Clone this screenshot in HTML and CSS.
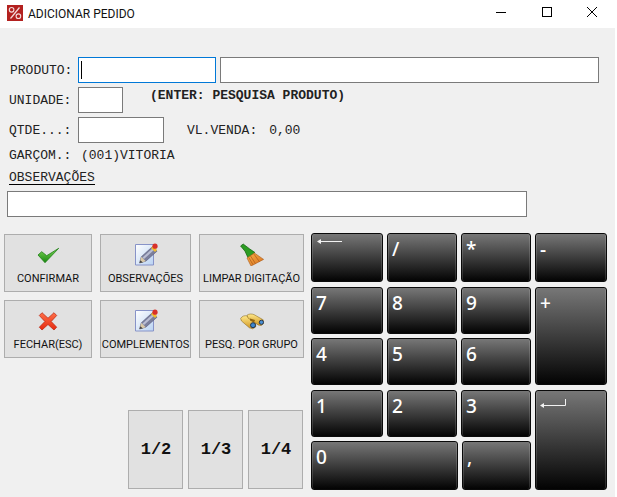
FILE: index.html
```html
<!DOCTYPE html>
<html lang="pt">
<head>
<meta charset="utf-8">
<title>ADICIONAR PEDIDO</title>
<link rel="stylesheet" href="styles.css">
</head>
<body>
<div class="window">
  <header class="titlebar">
    <svg class="app-icon" viewBox="0 0 16 16"><rect width="16" height="16" fill="#b3211f"/><circle cx="4.6" cy="4.8" r="2.3" fill="none" stroke="#f3dcdc" stroke-width="1.1"/><circle cx="11.4" cy="11.2" r="2.3" fill="none" stroke="#f3dcdc" stroke-width="1.1"/><path d="M12.5 2.5 3.5 13.5" stroke="#f3dcdc" stroke-width="1.2"/></svg>
    <span class="title">ADICIONAR PEDIDO</span>
    <div class="controls">
      <span class="ctl"><svg viewBox="0 0 12 12"><path d="M1 6.5h10" stroke="#000"/></svg></span>
      <span class="ctl"><svg viewBox="0 0 12 12"><rect x="1.5" y="1.5" width="9" height="9" fill="none" stroke="#000"/></svg></span>
      <span class="ctl"><svg viewBox="0 0 12 12"><path d="M1 1l10 10M11 1 1 11" stroke="#000" stroke-width="1"/></svg></span>
    </div>
  </header>
  <main class="content">
    <section class="form">
      <div class="row">
        <label class="label label-produto">PRODUTO:</label>
        <div class="input input-code focus"><span class="caret"></span></div>
        <div class="input input-desc"></div>
      </div>
      <div class="row">
        <label class="label">UNIDADE:</label>
        <div class="input input-unit"></div>
        <strong class="hint">(ENTER: PESQUISA PRODUTO)</strong>
      </div>
      <div class="row">
        <label class="label">QTDE...:</label>
        <div class="input input-qty"></div>
        <span class="price-label">VL.VENDA:</span>
        <span class="price-value">0,00</span>
      </div>
      <div class="row-waiter">
        <span class="waiter-label">GARÇOM.:</span>
        <span class="waiter-name">(001)VITORIA</span>
      </div>
      <div class="obs-title">OBSERVAÇÕES</div>
      <div class="input input-obs"></div>
    </section>
    <section class="lower">
      <div class="left">
        <div class="actions">
          <button class="action">
            <svg class="ico" viewBox="0 0 24 24"><defs><linearGradient id="g1" x1="0" y1="0" x2="0" y2="1"><stop offset="0" stop-color="#7fd957"/><stop offset="1" stop-color="#17860f"/></linearGradient></defs><path d="M22.7 6.3 9 20.7 2 13l3.7-3.3 5 4z" fill="url(#g1)" stroke="#1f7f18" stroke-width=".8"/></svg>
            <span>CONFIRMAR</span>
          </button>
          <button class="action">
            <svg class="ico" viewBox="0 0 24 24"><use href="#note"/></svg>
            <span>OBSERVAÇÕES</span>
          </button>
          <button class="action">
            <svg class="ico" viewBox="0 0 24 24"><defs><linearGradient id="g3" x1="0" y1="0" x2="1" y2="1"><stop offset="0" stop-color="#f9b04a"/><stop offset="1" stop-color="#d8701c"/></linearGradient></defs><path d="M.6 4 3.2 2 9.5 6.8 15 10.6 8 15.8 5 9.2z" fill="#2c9c23" stroke="#12600d" stroke-width=".7"/><path d="M7 16l7.4-5 9.2 6.4L11 24z" fill="url(#g3)" stroke="#a9591a" stroke-width=".6"/><path d="M10.5 14l5 7.6M14 12.2l5.5 7.6M8.8 15.5l4.2 7.2" stroke="#a9591a" stroke-width=".7" fill="none"/></svg>
            <span>LIMPAR DIGITAÇÃO</span>
          </button>
          <button class="action">
            <svg class="ico" viewBox="0 0 24 24"><defs><linearGradient id="g4" x1="0" y1="0" x2="0" y2="1"><stop offset="0" stop-color="#ff7048"/><stop offset="1" stop-color="#e52a10"/></linearGradient></defs><path d="M6 4.7 12 10.2l6-5.5 2.7 2.8-5.5 6 5.5 5.7L18 22l-6-5.5L6 22l-2.7-2.8 5.6-5.7-5.6-6z" fill="url(#g4)" stroke="#b71f0c" stroke-width=".7"/></svg>
            <span>FECHAR(ESC)</span>
          </button>
          <button class="action">
            <svg class="ico" viewBox="0 0 24 24">
              <defs>
                <linearGradient id="g2" x1="0" y1="0" x2="1" y2="1"><stop offset="0" stop-color="#fff"/><stop offset="1" stop-color="#b9d2f2"/></linearGradient>
                <g id="note">
                  <path d="M1.5 2.5H19.5V23H1.5z" fill="url(#g2)" stroke="#8793c8"/>
                  <path d="M5.5 21 7.3 14.8 18.5 4.6 23 9.2 11.8 19.2z" fill="#7b7f9c" stroke="#55597a" stroke-width=".6"/>
                  <path d="M8.5 15.5 19 6l1.5 1.5L10 17z" fill="#b9bdd3"/>
                  <path d="M5.5 21 7.3 14.8l4.5 4.4z" fill="#d9c9a8"/>
                  <path d="M5.5 21 6.3 18.2l2.6 2.2z" fill="#444"/>
                  <path d="M17 6 21 10l2-2-4-4z" fill="#f0bd2c"/>
                  <circle cx="21" cy="4.2" r="2.6" fill="#d8302a"/>
                </g>
              </defs>
              <use href="#note"/>
            </svg>
            <span>COMPLEMENTOS</span>
          </button>
          <button class="action">
            <svg class="ico" viewBox="0 0 24 24"><defs><linearGradient id="g5" x1="0" y1="0" x2="0" y2="1"><stop offset="0" stop-color="#ffe98a"/><stop offset="1" stop-color="#cf9420"/></linearGradient></defs><path d="M.6 10.5C2 8 5 7.2 7 8l8.5 6 .2 5-3 1.8-3.3-1L1.5 13z" fill="url(#g5)" stroke="#7d5a10" stroke-width=".5"/><path d="M7 7.2C9 5.6 12 5.8 14 6.6l9.2 5.2.2 4-2.2 1.8-3-.6L8 10z" fill="url(#g5)" stroke="#7d5a10" stroke-width=".5"/><path d="M10 10.5l5 1.5-1 2.5-4-2z" fill="#8f6410"/><circle cx="13" cy="17.2" r="2.5" fill="#3d87cf" stroke="#1d2f4a" stroke-width=".9"/><circle cx="21.4" cy="14.3" r="2.1" fill="#4a90d4" stroke="#1d2f4a" stroke-width=".9"/></svg>
            <span>PESQ. POR GRUPO</span>
          </button>
        </div>
        <div class="fractions">
          <button class="fraction">1/2</button>
          <button class="fraction">1/3</button>
          <button class="fraction">1/4</button>
        </div>
      </div>
      <div class="numpad">
        <button class="key"><svg class="glyph-back" viewBox="0 0 25 7"><path d="M1 3.5h24" stroke="#f2f2f2"/><path d="M0 3.5 4 1v5z" fill="#f2f2f2"/></svg></button>
        <button class="key">/</button>
        <button class="key">*</button>
        <button class="key">-</button>
        <button class="key">7</button>
        <button class="key">8</button>
        <button class="key">9</button>
        <button class="key key-tall">+</button>
        <button class="key">4</button>
        <button class="key">5</button>
        <button class="key">6</button>
        <button class="key">1</button>
        <button class="key">2</button>
        <button class="key">3</button>
        <button class="key key-tall"><svg class="glyph-enter" viewBox="0 0 26 14"><path d="M1 9.5h24.5V3" fill="none" stroke="#f2f2f2"/><path d="M0 9.5 4 7v5z" fill="#f2f2f2"/></svg></button>
        <button class="key key-wide">0</button>
        <button class="key key-comma">,</button>
      </div>
    </section>
  </main>
</div>
</body>
</html>
```
FILE: styles.css
```css
* { box-sizing: border-box; }
html, body { margin: 0; padding: 0; background: #fff; overflow: hidden; }
.window { width: 615px; height: 497px; display: flex; flex-direction: column; }

.titlebar { height: 28px; flex: none; display: flex; align-items: center; padding-left: 7px; background: #fff; }
.app-icon { width: 16px; height: 16px; margin-top: -2px; }
.title { margin: -1px 0 0 5px; font: 12px Roboto, sans-serif; color: #111; }
.controls { margin-left: auto; display: flex; margin-top: -4px; }
.ctl { width: 45.5px; display: flex; justify-content: center; }
.ctl svg { width: 12px; height: 12px; }

.content { flex: 1; background: #f0f0f0; }
.form { padding: 29px 0 0 7px; font: 13px/16px "Liberation Mono", monospace; color: #222; }
.row { display: flex; align-items: center; height: 26px; margin-bottom: 4px; }
.label { width: 71px; padding: 2px 0 0 2px; flex: none; }
.label-produto { padding-left: 3px; }
.input { height: 26px; border: 1px solid #7a7a7a; background: #fff; flex: none; position: relative; }
.input.focus { border-color: #0078d7; }
.input-code { width: 138px; }
.input-desc { width: 379px; margin-left: 4px; }
.input-unit { width: 45px; }
.input-qty { width: 86px; }
.input-obs { width: 520px; }
.caret { display: block; width: 1px; height: 18px; margin: 3px 0 0 2px; background: #000; }
.hint { margin: -8px 0 0 27px; font-weight: bold; }
.price-label { margin: 2px 0 0 23px; }
.price-value { margin: 2px 0 0 12px; }
.row-waiter { display: flex; height: 16px; padding: 1px 0 0 2px; }
.waiter-label { width: 72px; }
.obs-title { width: max-content; margin: 7px 0 6px 2px; padding-top: 1px; border-bottom: 1px solid #000; height: 15px; line-height: 14px; }

.lower { display: flex; margin-top: 16px; }
.left { width: 300px; margin-left: 4px; padding-top: 1px; flex: none; }
.actions { display: grid; grid-template-columns: 88px 91px 105px; grid-auto-rows: 58px; gap: 8px; }
.action, .fraction { margin: 0; padding: 0; border: 1px solid #adadad; background: #e1e1e1; color: #111; }
.action { display: flex; flex-direction: column; align-items: center; padding-top: 7px; font: 11px/14px Roboto, sans-serif; white-space: nowrap; }
.action span { margin-top: 6px; }
.ico { width: 24px; height: 24px; flex: none; display: block; }
.fractions { display: flex; justify-content: flex-end; gap: 5px; margin: 52px 1px 0 0; }
.fraction { width: 55px; height: 79px; padding-left: 1px; font: bold 17px "Liberation Mono", monospace; }

.numpad { margin-left: 7px; display: grid; grid-template-columns: 72px 70px 70px 72px; grid-template-rows: 49px 47px 47px 47px 49px; column-gap: 4px; row-gap: 4.5px; }
.key { margin: 0; padding: 3px 0 0 4px; display: flex; align-items: flex-start; border: 1px solid #0a0a0a; border-radius: 3px; background: linear-gradient(#777, #030303); box-shadow: inset 1px 0 rgba(255,255,255,.14), inset -1px 0 rgba(255,255,255,.14); color: #fff; font: 500 19px/24px "Noto Sans", sans-serif; }
.key-tall { grid-row: span 2; grid-column: 4; }
.key-wide { grid-column: span 2; margin-right: -1px; }
.key-comma { margin-left: 1px; }
.glyph-back { width: 25px; height: 7px; margin: 1px 0 0 1px; }
.glyph-enter { width: 26px; height: 14px; margin: 2px 0 0 0; }
```
